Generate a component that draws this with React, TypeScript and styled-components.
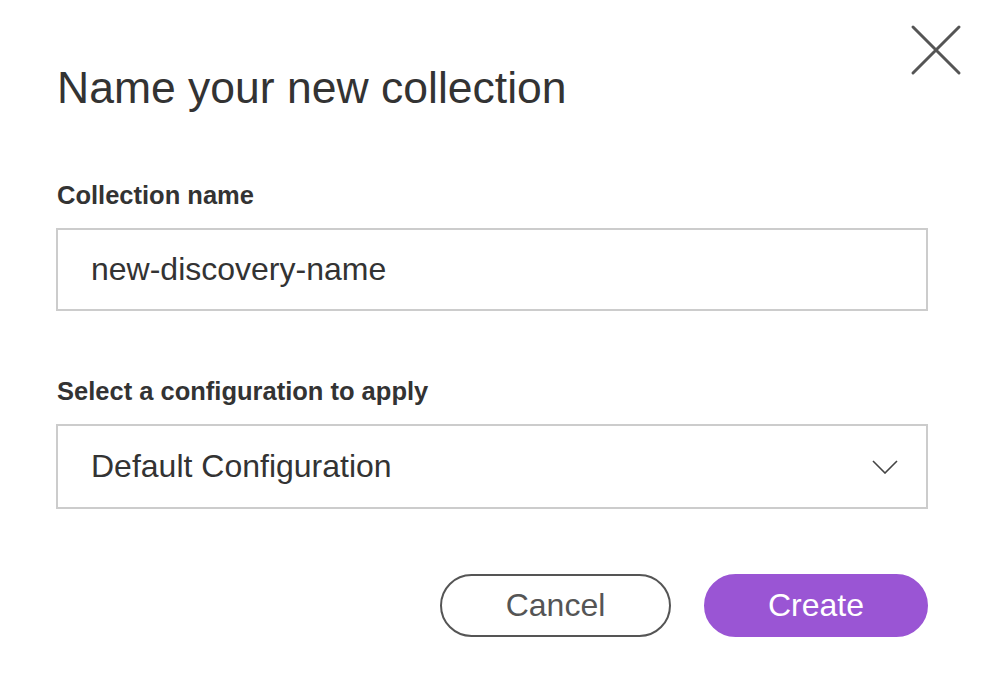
import styled, { createGlobalStyle } from "styled-components";

const GlobalStyle = createGlobalStyle`
    html, body {
        margin: 0;
        padding: 0;
        background: #fff;
    }
    body {
        font-family: "Liberation Sans", Arial, Helvetica, sans-serif;
        color: #333;
    }
`;

const Dialog = styled.div`
    position: relative;
    width: 984px;
    height: 698px;
    box-sizing: border-box;
    padding: 62px 56px 0 56px;
    background: #fff;
`;

const CloseButton = styled.button`
    position: absolute;
    top: 24px;
    right: 22px;
    width: 52px;
    height: 52px;
    padding: 0;
    border: none;
    background: none;
    cursor: pointer;
`;

const Title = styled.h1`
    margin: 0 0 0 1px;
    font-size: 44.5px;
    font-weight: 400;
    line-height: 52px;
    color: #333;
`;

const Field = styled.div<{ $top: number }>`
    display: flex;
    flex-direction: column;
    gap: 18px;
    margin-top: ${({ $top }) => $top}px;
`;

const Label = styled.label`
    margin-left: 1px;
    font-size: 25.5px;
    font-weight: 700;
    line-height: 30px;
    color: #333;
`;

const Box = styled.div<{ $height: number }>`
    display: flex;
    align-items: center;
    justify-content: space-between;
    height: ${({ $height }) => $height}px;
    box-sizing: border-box;
    border: 2px solid #ccc;
    padding: 0 28px 0 33px;
    font-size: 32px;
    color: #333;
`;

const Actions = styled.div`
    display: flex;
    justify-content: flex-end;
    gap: 33px;
    margin-top: 65px;
`;

const Pill = styled.button<{ $primary?: boolean }>`
    height: 63px;
    box-sizing: border-box;
    border-radius: 32px;
    font-family: inherit;
    font-size: 32px;
    cursor: pointer;
    border: 2px solid ${({ $primary }) => ($primary ? "#9a55d4" : "#555")};
    background: ${({ $primary }) => ($primary ? "#9a55d4" : "#fff")};
    color: ${({ $primary }) => ($primary ? "#fff" : "#555")};
    width: ${({ $primary }) => ($primary ? "224px" : "231px")};
`;

export default function App() {
    return (
        <>
            <GlobalStyle />
            <Dialog>
                <CloseButton aria-label="Close">
                    <svg width="52" height="52" viewBox="0 0 52 52">
                        <path d="M3 3 L49 49 M49 3 L3 49" stroke="#555" strokeWidth="3" strokeLinecap="round" />
                    </svg>
                </CloseButton>
                <Title>Name your new collection</Title>
                <Field $top={66}>
                    <Label>Collection name</Label>
                    <Box $height={83}>new-discovery-name</Box>
                </Field>
                <Field $top={65}>
                    <Label>Select a configuration to apply</Label>
                    <Box $height={85}>
                        Default Configuration
                        <svg width="26" height="14" viewBox="0 0 26 14">
                            <path d="M1 1 L13 13 L25 1" fill="none" stroke="#444" strokeWidth="1.6" />
                        </svg>
                    </Box>
                </Field>
                <Actions>
                    <Pill>Cancel</Pill>
                    <Pill $primary>Create</Pill>
                </Actions>
            </Dialog>
        </>
    );
}
